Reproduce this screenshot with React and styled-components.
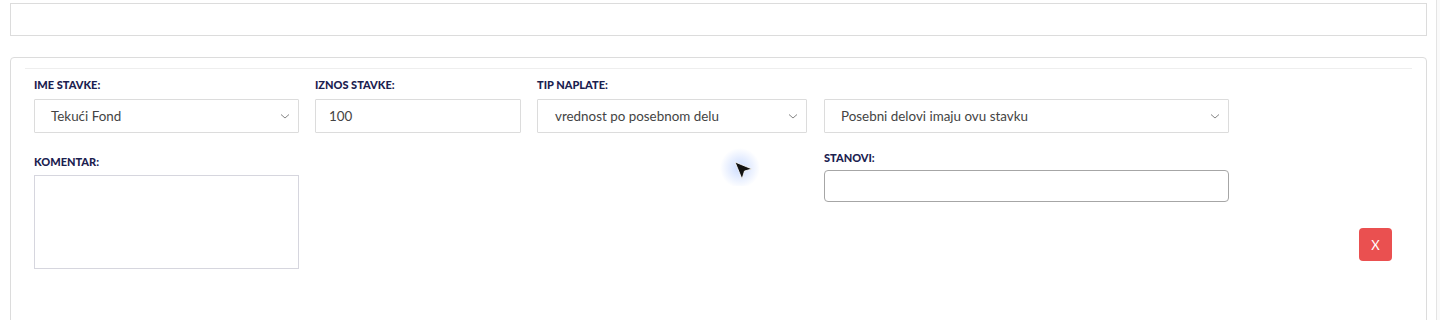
import React from "react";
import styled, { createGlobalStyle } from "styled-components";

const GlobalStyle = createGlobalStyle`
  html, body {
    margin: 0;
    padding: 0;
    background: #fff;
    font-family: Lato, "Open Sans", sans-serif;
    overflow: hidden;
  }
`;

const Page = styled.div`
  display: flex;
  width: 1440px;
  height: 320px;
  overflow: hidden;
`;

const Main = styled.div`
  flex: 1;
  padding: 3px 9px 0 10px;
  position: relative;
`;

const Scrollbar = styled.div`
  width: 3px;
  border-left: 1px solid #e4e4e4;
  background: #fafafa;
`;

const TopBox = styled.div`
  height: 31px;
  border: 1px solid #dcdcdc;
`;

const Card = styled.div`
  margin-top: 21px;
  height: 300px;
  border: 1px solid #dcdcdc;
  border-radius: 4px;
  padding: 10px 14px 0;
`;

const Divider = styled.div`
  height: 1px;
  background: #eeeeee;
`;

const Form = styled.div`
  display: grid;
  grid-template-columns: 265px 206px 270px 406px 1fr;
  column-gap: 16px;
  padding: 8px 0 0 9px;
`;

const Column = styled.div`
  display: flex;
  flex-direction: column;
  margin-left: ${({ $shift }) => $shift || 0}px;
`;

const Field = styled.div`
  display: flex;
  flex-direction: column;
  margin-top: ${({ $top }) => $top || 0}px;
`;

const Label = styled.div`
  height: 16px;
  line-height: 16px;
  font-size: 11px;
  font-weight: 900;
  color: #1b2150;
  text-transform: uppercase;
  margin-bottom: ${({ $gap }) => $gap ?? 6}px;
`;

const SelectBox = styled.div`
  position: relative;
  height: 32px;
  border: 1px solid #dcdcdc;
  border-radius: 1px;
  display: flex;
  align-items: center;
  padding-left: ${({ $pad }) => $pad || 16}px;
  font-size: 13.4px;
  color: #444;
  box-sizing: content-box;
`;

const Chevron = styled.svg`
  position: absolute;
  right: 8px;
  top: 12px;
  width: 10px;
  height: 8px;
`;

const TextArea = styled.div`
  height: 92px;
  border: 1px solid #d6d6de;
`;

const RoundInput = styled.div`
  height: 30px;
  border: 1px solid #a6a6a6;
  border-radius: 4px;
`;

const RemoveButton = styled.button`
  justify-self: end;
  align-self: start;
  margin: 151px 20px 0 0;
  width: 33px;
  height: 33px;
  border: none;
  border-radius: 4px;
  background: #ea5050;
  color: #fff;
  font-family: Lato, sans-serif;
  font-size: 13px;
  padding: 0;
`;

const Cursor = styled.svg`
  position: absolute;
  left: 716px;
  top: 142px;
  width: 44px;
  height: 44px;
`;

const Select = ({ children, pad }) => (
  <SelectBox $pad={pad}>
    {children}
    <Chevron viewBox="0 0 10 8">
      <path d="M1 2.5 L5 6 L9 2.5" fill="none" stroke="#777" strokeWidth="0.9" />
    </Chevron>
  </SelectBox>
);

export default function App() {
  return (
    <Page>
      <GlobalStyle />
      <Main>
        <TopBox />
        <Card>
          <Divider />
          <Form>
            <Column>
              <Field>
                <Label>Ime stavke:</Label>
                <Select pad={16}>Tekući Fond</Select>
              </Field>
              <Field $top={21}>
                <Label $gap={5}>Komentar:</Label>
                <TextArea />
              </Field>
            </Column>
            <Column>
              <Field>
                <Label>Iznos stavke:</Label>
                <SelectBox $pad={13}>100</SelectBox>
              </Field>
            </Column>
            <Column>
              <Field>
                <Label>Tip naplate:</Label>
                <Select pad={17}>vrednost po posebnom delu</Select>
              </Field>
            </Column>
            <Column $shift={1}>
              <Field>
                <Label />
                <Select pad={16}>Posebni delovi imaju ovu stavku</Select>
              </Field>
              <Field $top={17}>
                <Label $gap={4}>Stanovi:</Label>
                <RoundInput />
              </Field>
            </Column>
            <RemoveButton>X</RemoveButton>
          </Form>
        </Card>
        <Cursor viewBox="0 0 44 44">
          <defs>
            <radialGradient id="glow">
              <stop offset="0%" stopColor="#7ea6ff" stopOpacity="0.4" />
              <stop offset="100%" stopColor="#7ea6ff" stopOpacity="0" />
            </radialGradient>
          </defs>
          <circle cx="24" cy="26" r="20" fill="url(#glow)" />
          <path d="M19 20 L36 27 L28.5 29 L26 37 Z" fill="#111" stroke="#fff" strokeWidth="0.8" strokeLinejoin="round" />
        </Cursor>
      </Main>
      <Scrollbar />
    </Page>
  );
}
